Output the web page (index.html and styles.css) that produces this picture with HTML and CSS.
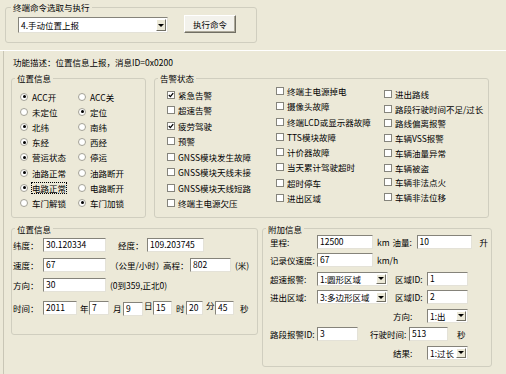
FILE: index.html
```html
<!DOCTYPE html>
<html lang="zh-CN">
  <head>
    <meta charset="UTF-8" />
    <title>终端命令</title>
    <link rel="stylesheet" href="styles.css">
  </head>
  <body>
    <fieldset class="group group-cmd">
      <legend>终端命令选取与执行</legend>
      <div class="cmd-row">
        <span class="combo combo-cmd"><span class="combo-text">4.手动位置上报</span><span class="combo-btn"></span></span>
        <button class="btn">执行命令</button>
      </div>
    </fieldset>

    <div class="panel">
      <div class="panel-body">
        <p class="desc">功能描述：位置信息上报，消息ID=0x0200</p>

        <div class="groups">
          <fieldset class="group group-state">
            <legend>位置信息</legend>
            <div class="radio-grid">
              <span class="radio on"><i></i>ACC开</span>
              <span class="radio"><i></i>ACC关</span>
              <span class="radio"><i></i>未定位</span>
              <span class="radio on"><i></i>定位</span>
              <span class="radio on"><i></i>北纬</span>
              <span class="radio"><i></i>南纬</span>
              <span class="radio on"><i></i>东经</span>
              <span class="radio"><i></i>西经</span>
              <span class="radio on"><i></i>营运状态</span>
              <span class="radio"><i></i>停运</span>
              <span class="radio on"><i></i>油路正常</span>
              <span class="radio"><i></i>油路断开</span>
              <span class="radio on"><i></i><span class="focus">电路正常</span></span>
              <span class="radio"><i></i>电路断开</span>
              <span class="radio"><i></i>车门解锁</span>
              <span class="radio on"><i></i>车门加锁</span>
            </div>
          </fieldset>

          <fieldset class="group group-alarm">
            <legend>告警状态</legend>
            <div class="alarm-cols">
              <div class="alarm-col col-1">
                <span class="check"><i><svg viewBox="0 0 6 6"><path d="M0.8 3 L2.4 4.6 L5.2 1.2" /></svg></i>紧急告警</span>
                <span class="check"><i></i>超速告警</span>
                <span class="check"><i><svg viewBox="0 0 6 6"><path d="M0.8 3 L2.4 4.6 L5.2 1.2" /></svg></i>疲劳驾驶</span>
                <span class="check"><i></i>预警</span>
                <span class="check"><i></i>GNSS模块发生故障</span>
                <span class="check"><i></i>GNSS模块天线未接</span>
                <span class="check"><i></i>GNSS模块天线短路</span>
                <span class="check"><i></i>终端主电源欠压</span>
              </div>
              <div class="alarm-col col-2">
                <span class="check"><i></i>终端主电源掉电</span>
                <span class="check"><i></i>摄像头故障</span>
                <span class="check"><i></i>终端LCD或显示器故障</span>
                <span class="check"><i></i>TTS模块故障</span>
                <span class="check"><i></i>计价器故障</span>
                <span class="check"><i></i>当天累计驾驶超时</span>
                <span class="check"><i></i>超时停车</span>
                <span class="check"><i></i>进出区域</span>
              </div>
              <div class="alarm-col col-3">
                <span class="check"><i></i>进出路线</span>
                <span class="check"><i></i>路段行驶时间不足/过长</span>
                <span class="check"><i></i>路线偏离报警</span>
                <span class="check"><i></i>车辆VSS报警</span>
                <span class="check"><i></i>车辆油量异常</span>
                <span class="check"><i></i>车辆被盗</span>
                <span class="check"><i></i>车辆非法点火</span>
                <span class="check"><i></i>车辆非法位移</span>
              </div>
            </div>
          </fieldset>
        </div>

        <div class="groups groups-bottom">
          <fieldset class="group group-pos">
            <legend>位置信息</legend>
            <div class="form">
              <div class="frow">
                <span class="w30">纬度：</span>
                <span class="field w63">30.120334</span>
                <span class="ml12 w29">经度：</span>
                <span class="field w57">109.203745</span>
              </div>
              <div class="frow">
                <span class="w30">速度：</span>
                <span class="field w63">67</span>
                <span class="ml4 w53">（公里/小时）</span>
                <span class="w27">高程：</span>
                <span class="field w41">802</span>
                <span class="ml4">(米)</span>
              </div>
              <div class="frow">
                <span class="w30">方向：</span>
                <span class="field w63">30</span>
                <span class="ml4">(0到359,正北0)</span>
              </div>
              <div class="frow frow-time">
                <span class="w30">时间：</span>
                <span class="field w34">2011</span>
                <span class="unit w12">年</span>
                <span class="field w20">7</span>
                <span class="unit w14">月</span>
                <span class="field w20 drop">9</span>
                <span class="unit-sm high">日</span>
                <span class="field w19">15</span>
                <span class="unit w14">时</span>
                <span class="field w17">20</span>
                <span class="unit w12 high">分</span>
                <span class="field w19">45</span>
                <span class="unit ml2">秒</span>
              </div>
            </div>
          </fieldset>

          <fieldset class="group group-extra">
            <legend>附加信息</legend>
            <div class="form form-extra">
              <div class="frow">
                <span class="w47">里程:</span>
                <span class="field w56">12500</span>
                <span class="ml4">km</span>
                <span class="ml3 w24">油量:</span>
                <span class="field w55">10</span>
                <span class="ml8">升</span>
              </div>
              <div class="frow">
                <span class="w47">记录仪速度:</span>
                <span class="field w56">67</span>
                <span class="ml4">km/h</span>
              </div>
              <div class="frow">
                <span class="w47">超速报警:</span>
                <span class="combo w71"><span class="combo-text">1:圆形区域</span><span class="combo-btn"></span></span>
                <span class="ml7 w32">区域ID:</span>
                <span class="field w41">1</span>
              </div>
              <div class="frow">
                <span class="w47">进出区域:</span>
                <span class="combo w71"><span class="combo-text">3:多边形区域</span><span class="combo-btn"></span></span>
                <span class="ml7 w32">区域ID:</span>
                <span class="field w41">2</span>
              </div>
              <div class="frow indent">
                <span class="w34">方向:</span>
                <span class="combo w41"><span class="combo-text">1:出</span><span class="combo-btn"></span></span>
              </div>
              <div class="frow">
                <span class="w47">路段报警ID:</span>
                <span class="field w41">3</span>
                <span class="ml12 w39">行驶时间:</span>
                <span class="field w39">513</span>
                <span class="ml9">秒</span>
              </div>
              <div class="frow indent">
                <span class="w34">结果:</span>
                <span class="combo w41"><span class="combo-text">1:过长</span><span class="combo-btn"></span></span>
              </div>
            </div>
          </fieldset>
        </div>
      </div>
    </div>
  </body>
</html>
```

FILE: styles.css
```css
* {
  box-sizing: border-box;
}

body {
  margin: 0;
  width: 506px;
  height: 374px;
  overflow: hidden;
  background: #ece9d8;
  color: #000;
  font-family: "Noto Sans CJK SC", "Liberation Sans", sans-serif;
  font-size: 8.5px;
  line-height: 10px;
}

/* group boxes */
.group {
  margin: 0;
  padding: 0;
  min-width: 0;
  border: 1px solid #d0cebf;
  border-radius: 3px;
}

.group legend {
  margin-left: 3px;
  padding: 0 2px;
  line-height: 10px;
}

.group-cmd {
  width: 252px;
  margin: 2px 0 0 5px;
}

.group-cmd legend {
  margin-left: 5px;
}

.cmd-row {
  display: flex;
  align-items: flex-end;
  gap: 16px;
  padding: 3px 0 9px 12px;
}

.btn {
  width: 52px;
  height: 18px;
  padding: 0;
  font: inherit;
  color: #000;
  background: #f3f2ec;
  border: 1px solid;
  border-color: #fff #716f64 #716f64 #fff;
  box-shadow: inset -1px -1px 0 #aca899;
}

/* lower panel */
.panel {
  margin-top: 7px;
  border-top: 1px solid #fff;
}

.panel-body {
  height: 323px;
  margin-left: 3px;
  border-left: 1px solid #c9c6b6;
  padding: 6px 0 0 7px;
}

.desc {
  margin: 0 0 6px 2px;
}

.groups {
  display: flex;
  gap: 8px;
}

.groups-bottom {
  margin-top: 6px;
  gap: 4px;
  align-items: flex-start;
}

.group-state {
  width: 135px;
}

.group-alarm {
  width: 335px;
}

.group-pos {
  width: 247px;
}

.group-extra {
  width: 230px;
}

/* radios */
.radio-grid {
  display: grid;
  grid-template-columns: 58px auto;
  grid-auto-rows: 15.2px;
  align-items: center;
  padding: 6px 0 6px 8px;
}

.radio,
.check {
  display: flex;
  align-items: center;
  gap: 4px;
  white-space: nowrap;
}

.radio i {
  flex: none;
  width: 8px;
  height: 8px;
  border-radius: 50%;
  border: 1px solid #a3a196;
  background: #fff;
  display: flex;
  align-items: center;
  justify-content: center;
}

.radio.on i::after {
  content: "";
  width: 3px;
  height: 3px;
  border-radius: 50%;
  background: #000;
}

.focus {
  outline: 1px dotted #000;
}

/* checkboxes */
.alarm-cols {
  display: flex;
  padding-left: 12px;
}

.alarm-col {
  display: flex;
  flex-direction: column;
  justify-content: space-between;
}

.col-1 {
  width: 109px;
  height: 118px;
  margin-top: 7px;
}

.col-2 {
  width: 108px;
  height: 117px;
  margin-top: 3px;
}

.col-3 {
  height: 113px;
  margin-top: 6px;
}

.check {
  gap: 3px;
  height: 10px;
}

.check i {
  flex: none;
  width: 8px;
  height: 8px;
  border: 1px solid #85847c;
  background: #fff;
  display: flex;
}

.check svg {
  width: 6px;
  height: 6px;
  fill: none;
  stroke: #000;
  stroke-width: 1.3;
}

/* form rows */
.form {
  display: flex;
  flex-direction: column;
  gap: 6px;
  padding: 4px 0 19px 1px;
}

.form-extra {
  gap: 4.5px;
  padding: 1px 0 6px 7px;
}

.frow {
  display: flex;
  align-items: center;
  height: 14px;
  white-space: nowrap;
}

.frow > * {
  flex: none;
}

.frow-time {
  margin-top: 3px;
}

.indent {
  padding-left: 123px;
}

.field,
.combo {
  height: 14px;
  background: #fff;
  border: 1px solid;
  border-color: #85837a #e4e2d8 #e4e2d8 #85837a;
}

.field {
  padding: 0 2px;
  line-height: 11px;
}

.combo {
  display: flex;
  align-items: center;
}

.combo-cmd {
  width: 150px;
  height: 16px;
}

.combo-text {
  flex: 1;
  padding-left: 2px;
  white-space: nowrap;
  overflow: hidden;
}

.combo-btn {
  flex: none;
  width: 10px;
  height: calc(100% - 2px);
  margin-right: 1px;
  background: #ece9d8;
  border: 1px solid;
  border-color: #fff #716f64 #716f64 #fff;
  display: flex;
  align-items: center;
  justify-content: center;
}

.combo-btn::after {
  content: "";
  border-left: 3px solid transparent;
  border-right: 3px solid transparent;
  border-top: 3px solid #000;
}

.unit {
  padding-left: 4px;
}

.unit.w12 {
  padding-left: 3px;
}

.unit-sm {
  width: 10px;
  padding-left: 1px;
}

.high {
  align-self: flex-start;
  margin-top: -1px;
}

.drop {
  margin-top: 3px;
}

/* widths and gaps */
.w12 { width: 12px; }
.w14 { width: 14px; }
.w17 { width: 17px; }
.w19 { width: 19px; }
.w20 { width: 20px; }
.w24 { width: 24px; }
.w27 { width: 27px; }
.w29 { width: 29px; }
.w30 { width: 30px; }
.w32 { width: 32px; }
.w34 { width: 34px; }
.w39 { width: 39px; }
.w41 { width: 41px; }
.w47 { width: 47px; }
.w53 { width: 53px; }
.w55 { width: 55px; }
.w56 { width: 56px; }
.w57 { width: 57px; }
.w63 { width: 63px; }
.w71 { width: 71px; }

.ml2 { margin-left: 2px; }
.ml3 { margin-left: 3px; }
.ml4 { margin-left: 4px; }
.ml7 { margin-left: 7px; }
.ml8 { margin-left: 8px; }
.ml9 { margin-left: 9px; }
.ml12 { margin-left: 12px; }
```
